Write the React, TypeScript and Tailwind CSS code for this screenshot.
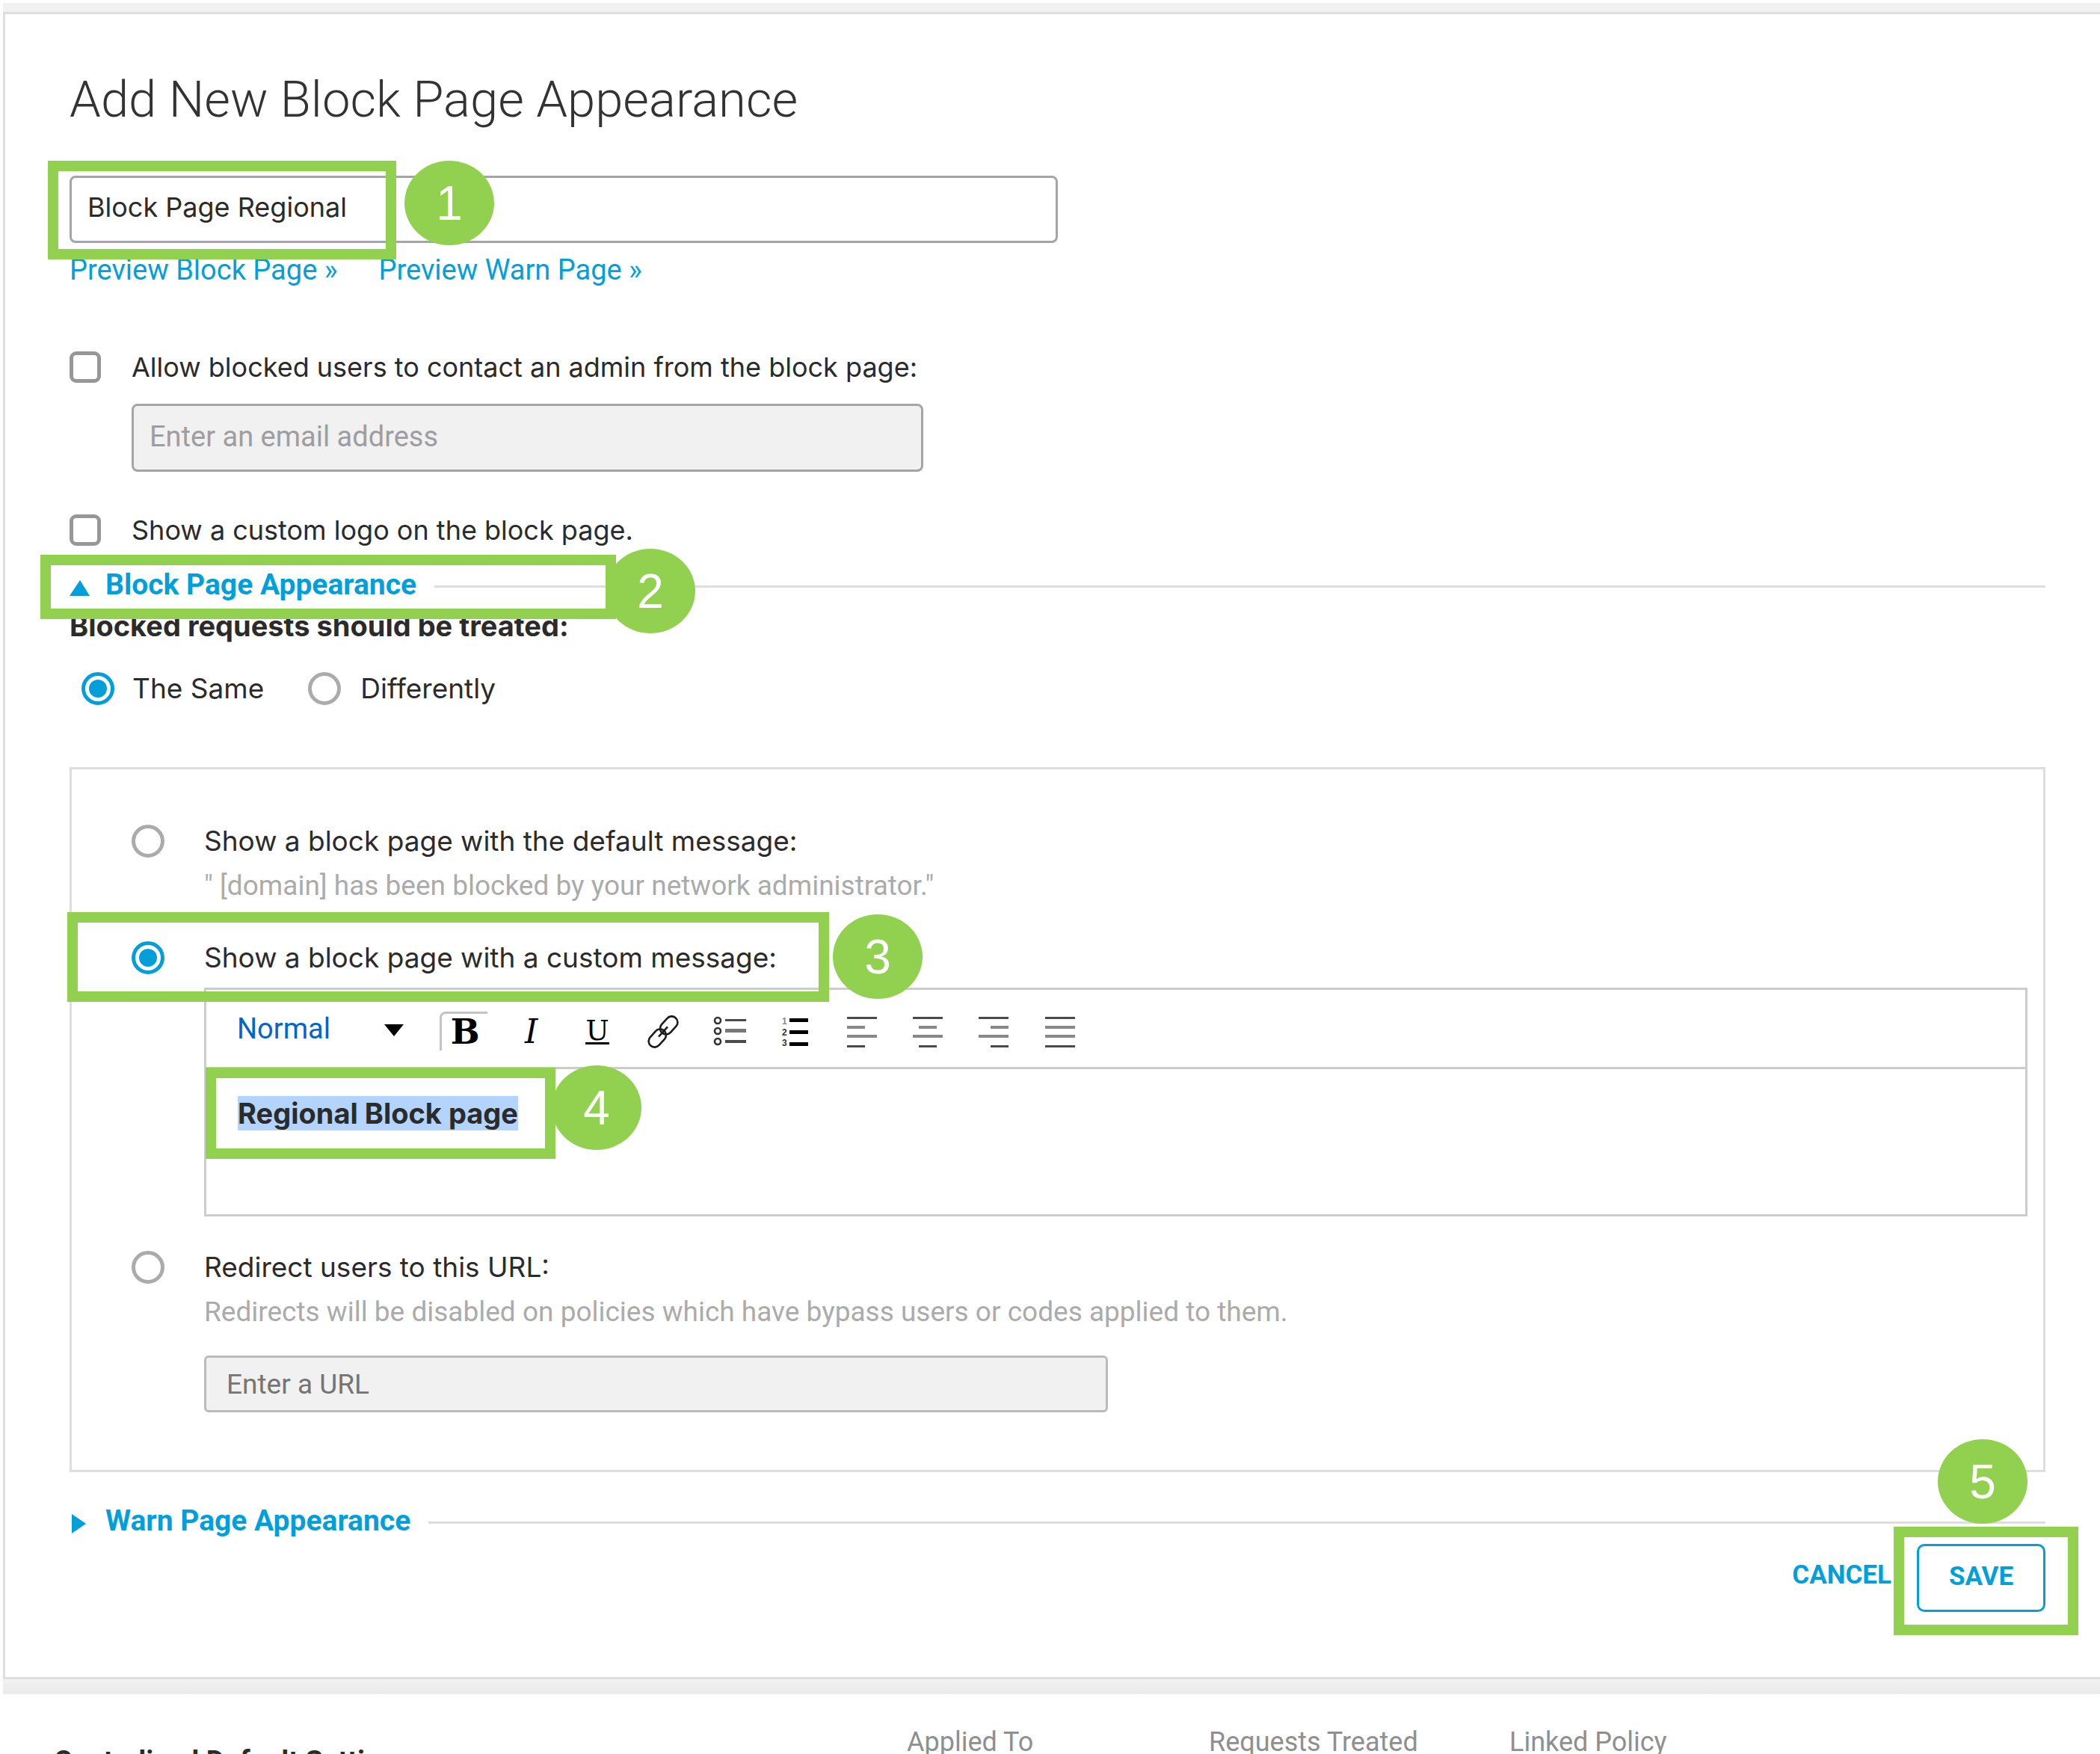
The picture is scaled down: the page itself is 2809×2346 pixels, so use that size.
import type { ReactNode } from "react";

const label = "font-['Inter',sans-serif] text-[36px] leading-[48px] text-[#2b2b2b]";
const radioLabel = "font-['Inter',sans-serif] text-[37px] leading-[48px] text-[#2b2b2b]";
const hint = "text-[37px] leading-[48px] text-[#ababab]";

function Highlight({ place }: { place: string }) {
  return <div aria-hidden className={`pointer-events-none absolute z-10 border-[14px] border-[#92d050] ${place}`} />;
}

function Step({ n, place }: { n: number; place: string }) {
  return (
    <div
      className={`absolute z-20 flex h-[113px] w-[120px] items-center justify-center rounded-[50%] bg-[#92d050] font-['Liberation_Sans',sans-serif] text-[64px] leading-[72px] text-white ${place}`}
    >
      {n}
    </div>
  );
}

function Radio({ id, name, checked }: { id: string; name: string; checked?: boolean }) {
  return (
    <input
      type="radio"
      id={id}
      name={name}
      defaultChecked={checked}
      className="size-11 shrink-0 appearance-none rounded-full border-[5px] border-[#ababab] bg-clip-content p-[5px] checked:border-[#049fd9] checked:bg-[#049fd9]"
    />
  );
}

function Check({ id }: { id: string }) {
  return (
    <input
      type="checkbox"
      id={id}
      className="size-[42px] shrink-0 appearance-none rounded-[9px] border-[5px] border-[#979797] bg-white checked:bg-[#049fd9]"
    />
  );
}

function SectionHeader({ title, open, children }: { title: string; open?: boolean; children?: ReactNode }) {
  return (
    <div className="relative flex items-center gap-6">
      <button type="button" aria-expanded={!!open} className="flex items-center gap-5 text-[39px] leading-[48px] font-bold text-[#049fd9]">
        <svg viewBox="0 0 28 28" className="mt-2 size-7 fill-current" aria-hidden>
          {open ? <path d="M0 25 L14 4 L27 25 Z" /> : <path d="M3 1 L22 14 L3 27 Z" />}
        </svg>
        {title}
      </button>
      <div className="mt-1 h-[3px] flex-1 bg-[#dedede]" />
      {children}
    </div>
  );
}

function Lines({ align }: { align: "left" | "center" | "right" | "full" }) {
  const x = align === "left" || align === "full" ? 2 : align === "center" ? 10 : 18;
  const w = align === "full" ? 40 : 24;
  return (
    <svg viewBox="0 0 44 44" className="size-11" aria-hidden>
      <rect x="2" y="2" width="40" height="3" fill="#4a4a4a" />
      <rect x={x} y="14" width={w} height="4" fill="#888" />
      <rect x="2" y="26" width="40" height="4" fill="#888" />
      <rect x={x} y="40" width={w} height="3" fill="#4a4a4a" />
    </svg>
  );
}

function Tool({ name, children }: { name: string; children: ReactNode }) {
  return (
    <button type="button" aria-label={name} className="relative flex h-[54px] items-center justify-center font-['DejaVu_Serif',serif] text-black">
      {children}
    </button>
  );
}

function Toolbar() {
  return (
    <div className="flex h-[106px] items-center border-b-[3px] border-[#ccc] pl-[41px]">
      <div className="relative mr-[38px] flex items-center">
        <select aria-label="Text style" className="w-[223px] appearance-none text-[38px] leading-[48px] text-[#0066cc]">
          <option>Normal</option>
        </select>
        <svg viewBox="0 0 26 18" className="pointer-events-none absolute right-0 mt-1 h-[18px] w-[26px]" aria-hidden>
          <path d="M0 1 H26 L13 17 Z" />
        </svg>
      </div>
      <div className="mt-2 grid w-[884px] grid-cols-10">
        <Tool name="Bold">
          <span aria-hidden className="absolute top-0 left-[10px] h-[52px] w-[64px] rounded-tl-lg border-t-[3px] border-l-[3px] border-[#c4c4c4]" />
          <span className="text-[46px] leading-[54px] font-bold">B</span>
        </Tool>
        <Tool name="Italic">
          <span className="text-[44px] leading-[54px] italic">I</span>
        </Tool>
        <Tool name="Underline">
          <span className="border-b-[3px] border-black text-[37px] leading-[31px]">U</span>
        </Tool>
        <Tool name="Link">
          <svg viewBox="0 0 44 44" className="size-11 fill-none stroke-[#1c1c1c] stroke-[2.6]" aria-hidden>
            <g transform="rotate(-48 22 22)">
              <rect x="-3" y="14" width="27" height="16" rx="8" />
              <rect x="20" y="14" width="27" height="16" rx="8" />
              <path d="M13 22 H31" />
            </g>
          </svg>
        </Tool>
        <Tool name="Bulleted list">
          <svg viewBox="0 0 44 44" className="size-11" aria-hidden>
            <g fill="none" stroke="#333" strokeWidth="2.6">
              <circle cx="6" cy="7" r="4" />
              <circle cx="6" cy="21" r="4" />
              <circle cx="6" cy="35" r="4" />
            </g>
            <rect x="16" y="5" width="28" height="3" fill="#4a4a4a" />
            <rect x="16" y="18" width="28" height="5" fill="#777" />
            <rect x="16" y="33" width="28" height="4" fill="#4a4a4a" />
          </svg>
        </Tool>
        <Tool name="Numbered list">
          <svg viewBox="0 0 44 44" className="size-11" aria-hidden>
            <g fill="#333" fontSize="12" fontWeight="700" fontFamily="Liberation Sans, sans-serif">
              <text x="4" y="12" fill="#888">1</text>
              <text x="4" y="27">2</text>
              <text x="4" y="41">3</text>
            </g>
            <rect x="14" y="4" width="25" height="5" />
            <rect x="14" y="20" width="25" height="5" />
            <rect x="14" y="36" width="25" height="5" />
          </svg>
        </Tool>
        <Tool name="Align left"><Lines align="left" /></Tool>
        <Tool name="Align center"><Lines align="center" /></Tool>
        <Tool name="Align right"><Lines align="right" /></Tool>
        <Tool name="Justify"><Lines align="full" /></Tool>
      </div>
    </div>
  );
}

export default function App() {
  return (
    <div className="h-screen overflow-hidden bg-white pt-1 pl-1 font-['Roboto',sans-serif] text-[#2b2b2b]">
      <div className="bg-[#f1f1f1] pt-3">
        <main className="border-y-[3px] border-l-[3px] border-[#dedede] bg-white pt-[74px] pr-[73px] pb-[87px] pl-[86px]">
          <h1 className="text-[67px] leading-[80px] font-light text-[#333]">Add New Block Page Appearance</h1>

          <div className="relative mt-[62px]">
            <input
              type="text"
              aria-label="Block page name"
              defaultValue="Block Page Regional"
              className={`block h-[90px] w-[1322px] rounded-lg border-[3px] border-[#a5a5a8] bg-white pb-1.5 pl-[21px] ${label}`}
            />
            <Highlight place="-top-5 -left-[29px] h-[132px] w-[466px]" />
            <Step n={1} place="-top-5 left-[448px]" />
          </div>

          <div className="mt-3 flex gap-[55px] text-[38px] leading-[48px] text-[#049fd9]">
            <a href="#preview-block">Preview Block Page »</a>
            <a href="#preview-warn">Preview Warn Page »</a>
          </div>

          <div className="mt-[82px] flex items-center gap-[41px]">
            <Check id="contact" />
            <label htmlFor="contact" className={label}>Allow blocked users to contact an admin from the block page:</label>
          </div>
          <input
            type="email"
            aria-label="Admin email address"
            placeholder="Enter an email address"
            className="mt-[25px] ml-[83px] block h-[91px] w-[1059px] rounded-lg border-[3px] border-[#a5a5a8] bg-[#f1f1f1] pb-1 pl-[21px] text-[38px] placeholder:text-[#9e9ea2]"
          />
          <div className="mt-[54px] flex items-center gap-[41px]">
            <Check id="logo" />
            <label htmlFor="logo" className={label}>Show a custom logo on the block page.</label>
          </div>

          <div className="mt-[25px]">
            <SectionHeader title="Block Page Appearance" open>
              <Highlight place="-top-4 -left-[39px] h-[86px] w-[770px]" />
              <Step n={2} place="-top-6 left-[717px]" />
            </SectionHeader>
          </div>

          <fieldset>
            <legend className="pt-[7px] font-['Inter',sans-serif] text-[38px] leading-[48px] font-bold">Blocked requests should be treated:</legend>
            <div className="mt-9 flex items-center pl-4">
              <Radio id="same" name="treated" checked />
              <label htmlFor="same" className={`ml-6 ${radioLabel}`}>The Same</label>
              <div className="ml-[59px] flex items-center gap-[26px]">
                <Radio id="diff" name="treated" />
                <label htmlFor="diff" className={radioLabel}>Differently</label>
              </div>
            </div>
          </fieldset>

          <section className="mt-[81px] border-[3px] border-[#dedede] pt-[72px] pr-[21px] pb-[77px] pl-20">
            <div className="flex items-center gap-[53px]">
              <Radio id="default" name="message" />
              <label htmlFor="default" className={radioLabel}>Show a block page with the default message:</label>
            </div>
            <p className={`mt-3 pl-[97px] ${hint}`}>" [domain] has been blocked by your network administrator."</p>

            <div className="relative mt-12 flex items-center gap-[53px]">
              <Radio id="custom" name="message" checked />
              <label htmlFor="custom" className={radioLabel}>Show a block page with a custom message:</label>
              <Highlight place="-top-[37px] -left-[86px] h-[120px] w-[1019px]" />
              <Step n={3} place="-top-[34px] left-[938px]" />
            </div>
            <div className="mt-4 ml-[97px] border-[3px] border-[#ccc]">
              <Toolbar />
              <div className="relative min-h-[194px]">
                <div role="textbox" aria-label="Custom message" contentEditable suppressContentEditableWarning className="px-[42px] pt-[35px]">
                  <mark className="bg-[#b3d4fc] font-['Inter',sans-serif] text-[38px] leading-[48px] font-bold text-[#2b2b2b]">Regional Block page</mark>
                </div>
                <Highlight place="-top-[2px] -left-px h-[122px] w-[468px]" />
                <Step n={4} place="-top-[5px] left-[462px]" />
              </div>
            </div>

            <div className="mt-11 flex items-center gap-[53px]">
              <Radio id="redirect" name="message" />
              <label htmlFor="redirect" className={radioLabel}>Redirect users to this URL:</label>
            </div>
            <p className={`mt-3 pl-[97px] ${hint}`}>Redirects will be disabled on policies which have bypass users or codes applied to them.</p>
            <input
              type="url"
              aria-label="Redirect URL"
              placeholder="Enter a URL"
              className="mt-[34px] ml-[97px] block h-[76px] w-[1209px] rounded-md border-[3px] border-[#bbb] bg-[#f1f1f1] pl-[27px] text-[37px] placeholder:text-[#757575]"
            />
          </section>

          <div className="mt-[41px]">
            <SectionHeader title="Warn Page Appearance" />
          </div>

          <div className="mt-[7px] flex items-center justify-end gap-[34px] text-[35px] leading-[48px] font-bold text-[#049fd9]">
            <button type="button" className="pb-2">CANCEL</button>
            <div className="relative">
              <button type="button" className="h-[91px] w-[172px] rounded-[10px] border-[3px] border-[#049fd9] bg-white pb-1">SAVE</button>
              <Highlight place="-top-[23px] -left-[31px] h-[145px] w-[247px]" />
              <Step n={5} place="-top-[140px] left-7 font-normal" />
            </div>
          </div>
        </main>
      </div>

      <div className="h-5 bg-linear-to-b from-[#f1f1f1] to-[#ebebeb]" />
      <section className="grid grid-cols-[1141fr_404fr_402fr_790fr] bg-white pt-10 pl-[68px] text-[36px] leading-[48px] text-[#8f8f8f]">
        <h2 className="mt-[26px] text-[38px] font-bold text-[#2b2b2b]">Centralized Default Settings</h2>
        <div>Applied To</div>
        <div>Requests Treated</div>
        <div>Linked Policy</div>
      </section>
    </div>
  );
}
